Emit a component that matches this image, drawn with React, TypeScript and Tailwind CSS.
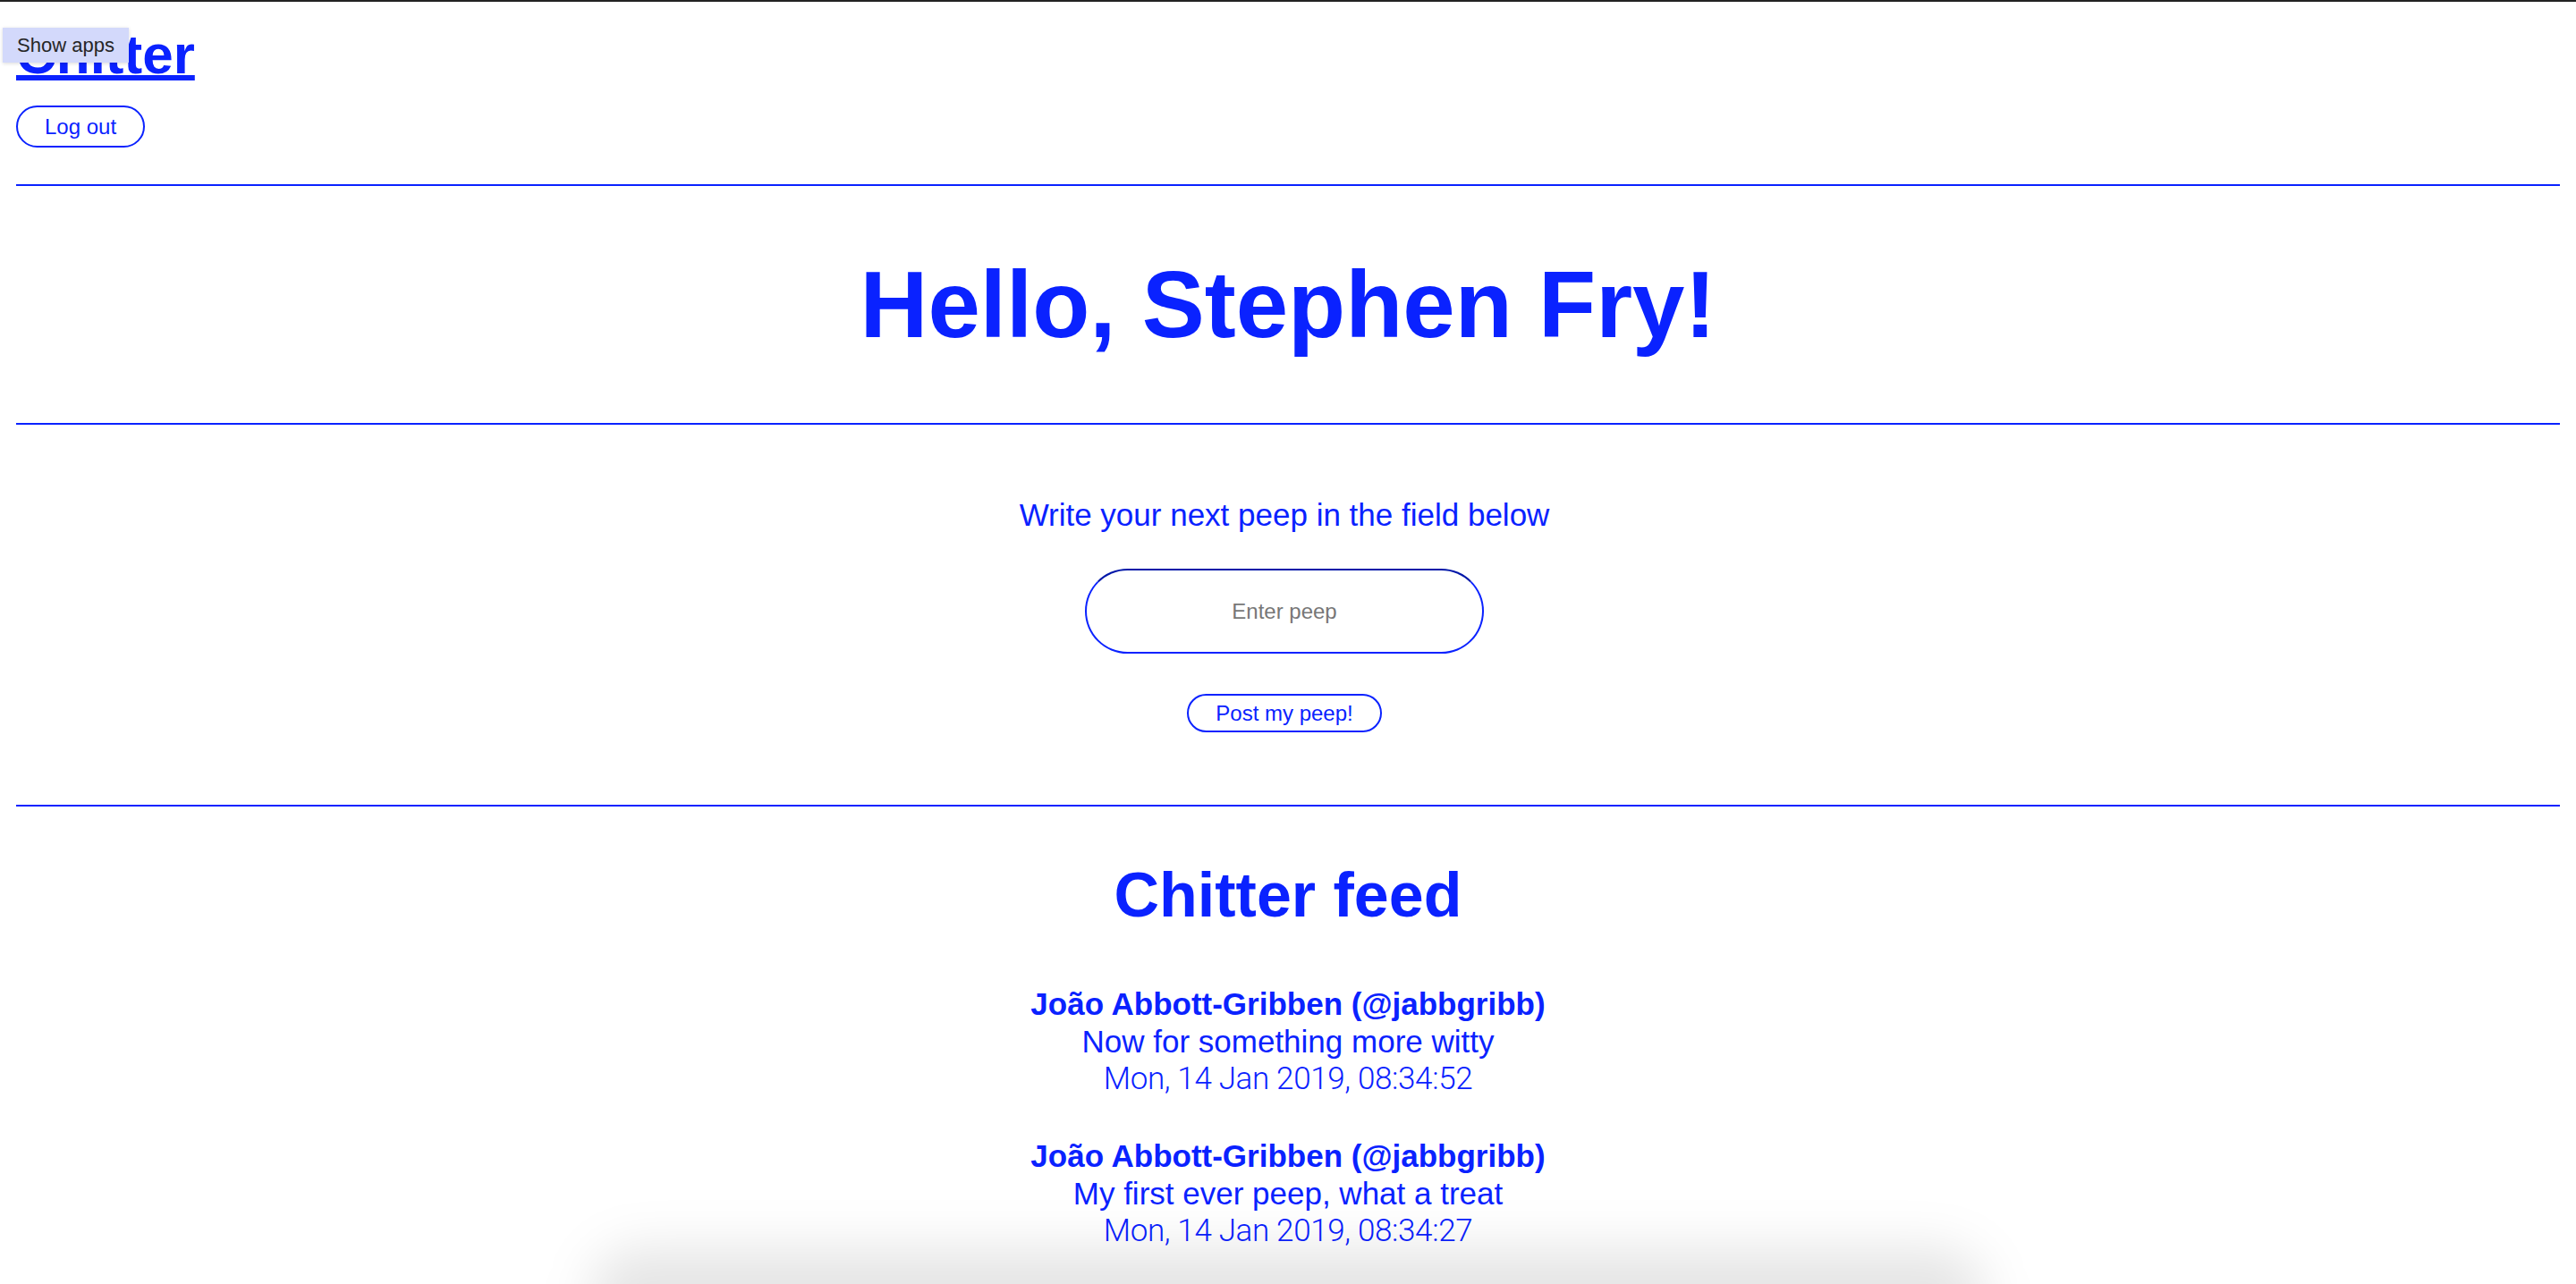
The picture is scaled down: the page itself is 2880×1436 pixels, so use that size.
import React from "react";

const blue = "text-[#0a22ff]";

interface Peep {
  name: string;
  handle: string;
  body: string;
  time: string;
}

const peeps: Peep[] = [
  {
    name: "João Abbott-Gribben",
    handle: "jabbgribb",
    body: "Now for something more witty",
    time: "Mon, 14 Jan 2019, 08:34:52",
  },
  {
    name: "João Abbott-Gribben",
    handle: "jabbgribb",
    body: "My first ever peep, what a treat",
    time: "Mon, 14 Jan 2019, 08:34:27",
  },
];

const Rule = () => <div className="h-[2px] w-full bg-[#0a22ff]" />;

const PeepItem: React.FC<{ peep: Peep }> = ({ peep }) => (
  <div className={`flex flex-col items-center text-[35px] leading-[42px] ${blue}`}>
    <div className="font-bold">
      {peep.name} (@{peep.handle})
    </div>
    <div>{peep.body}</div>
    <div className="font-light tracking-[-0.35px] font-['Roboto',sans-serif]">{peep.time}</div>
  </div>
);

export default function App() {
  return (
    <div className="relative h-[1436px] overflow-hidden border-t-2 border-[#222] bg-white font-['Liberation_Sans',Arial,sans-serif]">
      <div className="px-[18px]">
        <h1 className={`mt-[24px] text-[62px] font-bold leading-[69px] ${blue}`}>
          <a href="#" className="underline decoration-[6px] underline-offset-[2px]">
            Chitter
          </a>
        </h1>
        <button
          className={`mt-[23px] rounded-full border-2 border-[#0a22ff] px-[30px] py-[8px] text-[24px] leading-[27px] ${blue}`}
        >
          Log out
        </button>

        <div className="mt-[41px]">
          <Rule />
        </div>

        <div className="py-[74px] text-center">
          <h2 className={`text-[105px] font-bold leading-[117px] ${blue}`}>
            Hello, Stephen Fry!
          </h2>
        </div>

        <Rule />

        <div className="flex flex-col items-center pt-[81px] pb-[81px] pr-[8px]">
          <p className={`text-[35px] leading-[39px] ${blue}`}>
            Write your next peep in the field below
          </p>
          <input
            placeholder="Enter peep"
            className="mt-[41px] h-[95px] w-[446px] rounded-full border-2 border-[#0a22ff] border-t-[#0016a8] bg-white text-center text-[24px] text-[#333] outline-none placeholder:text-[#777]"
          />
          <button
            className={`mt-[45px] rounded-full border-2 border-[#0a22ff] px-[30px] py-[6px] text-[24px] leading-[27px] ${blue}`}
          >
            Post my peep!
          </button>
        </div>

        <Rule />

        <div className="flex flex-col items-center pt-[60px]">
          <h2 className={`text-[70px] font-bold leading-[78px] ${blue}`}>Chitter feed</h2>
          <div className="mt-[62px] flex flex-col gap-[44px]">
            {peeps.map((p, i) => (
              <PeepItem key={i} peep={p} />
            ))}
          </div>
        </div>
      </div>

      <div className="absolute left-[3px] top-[29px] flex h-[39px] w-[141px] items-center justify-center bg-[#d3d9fb] text-[22px] text-[#262626] shadow-[0_1px_4px_rgba(0,0,0,0.15)]">
        Show apps
      </div>

      <div className="pointer-events-none absolute bottom-[-70px] left-1/2 h-[110px] w-[1560px] -translate-x-1/2 rounded-full bg-black/10 blur-[28px]" />
    </div>
  );
}
